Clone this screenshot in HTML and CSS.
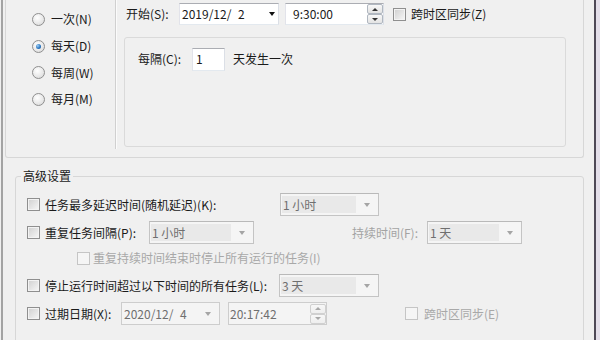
FILE: index.html
```html
<!DOCTYPE html>
<html lang="zh-CN">
<head>
<meta charset="utf-8">
<link rel="stylesheet" href="styles.css">
</head>
<body>
<div class="win">
  <div class="edge-l"></div>
  <div class="main">
    <div class="sched">
      <div class="radios">
        <div class="radio-row"><span class="radio"></span><span>一次(N)</span></div>
        <div class="radio-row"><span class="radio checked"></span><span>每天(D)</span></div>
        <div class="radio-row"><span class="radio"></span><span>每周(W)</span></div>
        <div class="radio-row"><span class="radio"></span><span>每月(M)</span></div>
      </div>
      <div class="right">
        <div class="start-row">
          <span class="start-lbl">开始(S):</span>
          <div class="combo"><span class="val">2019/12/&#8199;2</span><span class="arrow"></span></div>
          <div class="timebox"><span class="val tval">9:30:00</span><div class="spin"><span class="up"></span><span class="down"></span></div></div>
          <span class="cb tz-cb"></span><span class="tz-lbl">跨时区同步(Z)</span>
        </div>
        <div class="panel">
          <div class="every">
            <span class="every-lbl">每隔(C):</span>
            <div class="num">1</div>
            <span class="every-txt">天发生一次</span>
          </div>
        </div>
      </div>
    </div>
    <fieldset class="adv">
      <legend>高级设置</legend>
      <div class="rows">
        <div class="r r1">
          <span class="cb"></span><span class="lbl w235">任务最多延迟时间(随机延迟)(K):</span>
          <div class="dcombo w99"><span class="dtxt">1 小时</span><span class="darrow-box"><span class="darrow"></span></span></div>
        </div>
        <div class="r r2">
          <span class="cb"></span><span class="lbl w104">重复任务间隔(P):</span>
          <div class="dcombo w105"><span class="dtxt">1 小时</span><span class="darrow-box"><span class="darrow"></span></span></div>
          <span class="dur-lbl">持续时间(F):</span>
          <div class="dcombo w95"><span class="dtxt">1 天</span><span class="darrow-box"><span class="darrow"></span></span></div>
        </div>
        <div class="r r3">
          <span class="cb off"></span><span class="sub-lbl">重复持续时间结束时停止所有运行的任务(I)</span>
        </div>
        <div class="r r4">
          <span class="cb"></span><span class="lbl w234">停止运行时间超过以下时间的所有任务(L):</span>
          <div class="dcombo w100"><span class="dtxt">3 天</span><span class="darrow-box"><span class="darrow"></span></span></div>
        </div>
        <div class="r r5">
          <span class="cb"></span><span class="lbl w76">过期日期(X):</span>
          <div class="ddate"><span class="dval">2020/12/&#8199;4</span><span class="darrow"></span></div>
          <div class="dtime"><span class="dval tval">20:17:42</span><div class="spin off"><span class="up"></span><span class="down"></span></div></div>
          <span class="cb off tz2-cb"></span><span class="tz2-lbl">跨时区同步(E)</span>
        </div>
      </div>
    </fieldset>
  </div>
  <div class="edge-r"></div>
  <div class="edge-out"></div>
</div>
</body>
</html>
```

FILE: styles.css
```css
* { box-sizing: border-box; }
html, body { margin: 0; padding: 0; }
body {
  width: 600px;
  height: 340px;
  overflow: hidden;
  background: #f0f0f0;
  font-family: "Noto Sans CJK SC", "Microsoft YaHei", sans-serif;
  font-size: 12px;
  line-height: 16px;
  color: #1a1a1a;
}
.win { display: flex; height: 340px; }
.edge-l { flex: none; width: 2px; margin-left: 1px; background: #a3a3a3; }
.main { flex: none; width: 591px; padding-left: 2px; padding-right: 10px; }
.edge-r { flex: none; width: 2px; background: #4f4a57; }
.edge-out { flex: 1; background: #e4dfea; }

/* upper schedule frame */
.sched {
  height: 158px;
  border: 1px solid #d7d7d7;
  border-top: none;
  border-radius: 0 0 3px 3px;
  display: flex;
  align-items: flex-start;
}
.radios {
  flex: none;
  width: 110px;
  height: 149px;
  border-right: 1px solid #d0d0d0;
  box-shadow: 1px 0 0 #fbfbfb;
  padding: 6px 0 0 26px;
}
.radio-row { display: flex; align-items: center; height: 26.7px; }
.radio {
  flex: none;
  width: 13px;
  height: 13px;
  border-radius: 50%;
  border: 1px solid #8f8f8f;
  background: radial-gradient(circle at 40% 35%, #ffffff 0%, #e9e9e9 55%, #d4d4d4 100%);
  margin-right: 6px;
  position: relative;
}
.radio.checked::after {
  content: "";
  position: absolute;
  left: 3px; top: 3px;
  width: 5px; height: 5px;
  border-radius: 50%;
  background: radial-gradient(circle at 35% 35%, #9fd0f5 0%, #2d78c3 55%, #164f8c 100%);
}

.right { flex: 1; padding-left: 8px; }
.start-row { display: flex; align-items: center; height: 22px; margin-top: 3px; }
.start-lbl { width: 55px; padding-left: 2px; }
.combo {
  width: 100px; height: 22px;
  border: 1px solid; border-color: #abadb3 #dbdfe6 #e3e9ef #e2e3ea;
  background: #fff;
  display: flex; align-items: center;
  padding-left: 2px;
}
.val { white-space: pre; }
.arrow {
  margin-left: auto; margin-right: 3px;
  width: 0; height: 0;
  border-left: 3.5px solid transparent;
  border-right: 3.5px solid transparent;
  border-top: 4px solid #111;
}
.timebox {
  width: 99px; height: 22px; margin-left: 6px;
  border: 1px solid; border-color: #abadb3 #dbdfe6 #e3e9ef #e2e3ea;
  background: #fff;
  display: flex; align-items: center;
}
.tval { padding-left: 7px; }
.spin {
  margin-left: auto;
  width: 16px; height: 20px;
  display: flex; flex-direction: column;
}
.spin span {
  flex: 1;
  border: 1px solid #b0b7c0;
  border-radius: 2px;
  background: linear-gradient(#f7f7f7, #e3e3e3);
  display: flex; align-items: center; justify-content: center;
}
.spin .up::after {
  content: ""; width: 0; height: 0;
  border-left: 3px solid transparent; border-right: 3px solid transparent;
  border-bottom: 3px solid #333;
}
.spin .down::after {
  content: ""; width: 0; height: 0;
  border-left: 3px solid transparent; border-right: 3px solid transparent;
  border-top: 3px solid #333;
}
.spin.off span { border-color: #d0d0d0; background: linear-gradient(#f7f7f7, #eeeeee); }
.spin.off .up::after { border-bottom-color: #a8a8a8; }
.spin.off .down::after { border-top-color: #a8a8a8; }

.cb {
  flex: none;
  width: 13px; height: 13px;
  border: 1px solid #8f8f8f;
  background: linear-gradient(135deg, #cfcfcf, #f7f7f7);
  box-shadow: inset 0 0 0 1px #f3f3f3;
}
.cb.off { border-color: #c5c5c5; background: #f5f5f5; box-shadow: none; }
.tz-cb { margin-left: 9px; }
.tz-lbl { margin-left: 5px; }

.panel {
  margin-top: 12px;
  width: 442px; height: 110px;
  border: 1px solid #dadada;
  border-radius: 3px;
  padding: 10px 0 0 13px;
}
.every { display: flex; align-items: center; height: 22px; }
.every-lbl { width: 54px; }
.num {
  width: 33px; height: 23px;
  border: 1px solid; border-color: #abadb3 #dbdfe6 #e3e9ef #e2e3ea;
  background: #fff;
  padding-left: 3px;
  display: flex; align-items: center;
}
.every-txt { margin-left: 8px; }

/* advanced group */
.adv {
  margin: 10px 0 0 10px;
  padding: 0;
  border: 1px solid #d7d7d7;
  border-radius: 3px;
  height: 220px;
  min-width: 0;
}
.adv legend { margin-left: 5px; padding: 0 2px; line-height: 16px; }
.rows { padding: 9px 0 0 11px; }
.r { display: flex; align-items: center; height: 23px; }
.r2 { margin-top: 5px; }
.r3 { margin-top: 6px; height: 16px; padding-left: 50px; }
.r4 { margin-top: 8px; }
.r5 { margin-top: 5px; }
.lbl { margin-left: 5px; flex: none; }
.w235 { width: 235px; }
.w234 { width: 234px; }
.w104 { width: 104px; }
.w76 { width: 76px; }

.dcombo {
  flex: none;
  height: 23px;
  border: 1px solid #c4c4c4;
  border-top-color: #b9b9b9;
  background: #f5f5f5;
  display: flex; align-items: stretch;
  padding: 2px 0 2px 1px;
}
.w99 { width: 99px; }
.w105 { width: 105px; }
.w95 { width: 95px; }
.w100 { width: 100px; }
.dtxt {
  flex: 1;
  background: #e9e9e9;
  color: #6f6f6f;
  padding-left: 1px;
  display: flex; align-items: center;
}
.darrow-box { flex: none; width: 22px; display: flex; align-items: center; justify-content: center; }
.darrow {
  width: 0; height: 0;
  border-left: 3.5px solid transparent;
  border-right: 3.5px solid transparent;
  border-top: 4px solid #a5a5a5;
}
.dur-lbl { flex: none; width: 173px; text-align: right; padding-right: 9px; color: #a3a3a3; }
.sub-lbl { margin-left: 3px; color: #a8a8a8; }

.ddate, .dtime {
  flex: none;
  width: 99px; height: 23px;
  border: 1px solid #cdcdcd;
  background: #f4f4f4;
  display: flex; align-items: center;
  color: #6f6f6f;
}
.ddate { padding-left: 2px; }
.ddate .darrow { margin-left: auto; margin-right: 8px; }
.dval { white-space: pre; }
.dtime { margin-left: 8px; }
.dtime .tval { padding-left: 1px; }
.tz2-cb { margin-left: 78px; }
.tz2-lbl { margin-left: 6px; color: #a8a8a8; }
```
